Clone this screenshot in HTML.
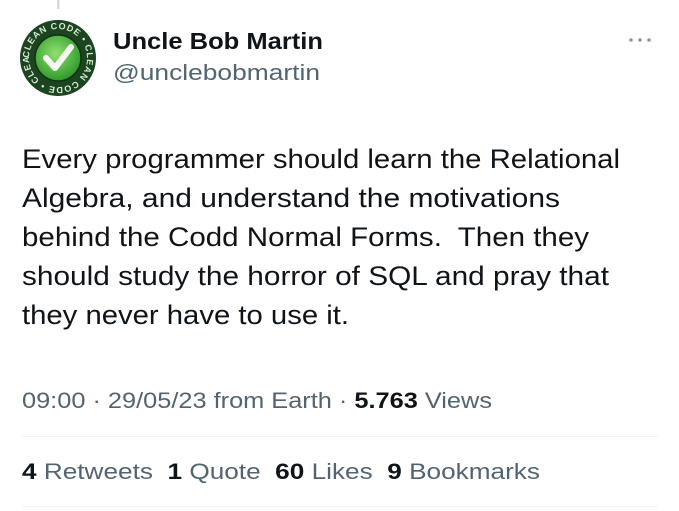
<!DOCTYPE html>
<html><head><meta charset="utf-8"><style>
html,body{margin:0;padding:0;background:#fff;width:679px;height:511px;overflow:hidden}
svg{display:block}
text{font-family:"Liberation Sans",sans-serif}
</style></head><body>
<svg width="679" height="511" viewBox="0 0 679 511" xmlns="http://www.w3.org/2000/svg">
<defs>
<radialGradient id="g" cx="45%" cy="40%" r="60%"><stop offset="0" stop-color="#8fe070"/><stop offset="1" stop-color="#2f9a2a"/></radialGradient>
<path id="ring" d="M58,58 m-29,0 a29,29 0 1,1 58,0 a29,29 0 1,1 -58,0"/>
</defs>
<rect x="57" y="0" width="2.5" height="9" fill="#cfd9de"/>
<circle cx="58" cy="58" r="38" fill="#1b4420"/>
<text font-size="9" font-weight="bold" fill="#d8e8d0" letter-spacing="0.8"><textPath href="#ring" startOffset="0">CLEAN CODE • CLEAN CODE • CLEAN CODE •</textPath></text>
<circle cx="58" cy="58" r="23" fill="url(#g)" stroke="#143016" stroke-width="1.5"/>
<path d="M46,58 L55,68 L71,47" fill="none" stroke="#f4f8f0" stroke-width="6" stroke-linecap="round" stroke-linejoin="round"/>
<text x="113" y="49" font-size="23" font-weight="bold" fill="#0f1419" textLength="210" lengthAdjust="spacingAndGlyphs">Uncle Bob Martin</text>
<text x="113" y="80" font-size="22" fill="#536471" textLength="207" lengthAdjust="spacingAndGlyphs">@unclebobmartin</text>
<circle cx="631" cy="40" r="1.8" fill="#8b98a5"/><circle cx="640" cy="40" r="1.8" fill="#8b98a5"/><circle cx="649" cy="40" r="1.8" fill="#8b98a5"/>
<g font-size="27" fill="#0f1419">
<text x="22" y="168" textLength="598" lengthAdjust="spacingAndGlyphs">Every programmer should learn the Relational</text>
<text x="22" y="207" textLength="538" lengthAdjust="spacingAndGlyphs">Algebra, and understand the motivations</text>
<text x="22" y="246" textLength="567" lengthAdjust="spacingAndGlyphs" xml:space="preserve">behind the Codd Normal Forms.  Then they</text>
<text x="22" y="285" textLength="587" lengthAdjust="spacingAndGlyphs">should study the horror of SQL and pray that</text>
<text x="22" y="324" textLength="327" lengthAdjust="spacingAndGlyphs">they never have to use it.</text>
</g>
<text x="22" y="408" font-size="22" fill="#536471" textLength="470" lengthAdjust="spacingAndGlyphs">09:00 · 29/05/23 from Earth · <tspan font-weight="bold" fill="#0f1419">5.763</tspan> Views</text>
<rect x="22" y="436" width="636" height="1" fill="#eff3f4"/>
<text x="22" y="479" font-size="22" fill="#536471" textLength="518" lengthAdjust="spacingAndGlyphs" xml:space="preserve"><tspan font-weight="bold" fill="#0f1419">4</tspan> Retweets  <tspan font-weight="bold" fill="#0f1419">1</tspan> Quote  <tspan font-weight="bold" fill="#0f1419">60</tspan> Likes  <tspan font-weight="bold" fill="#0f1419">9</tspan> Bookmarks</text>
<rect x="22" y="506" width="636" height="1" fill="#eff3f4"/>
</svg>
</body></html>
